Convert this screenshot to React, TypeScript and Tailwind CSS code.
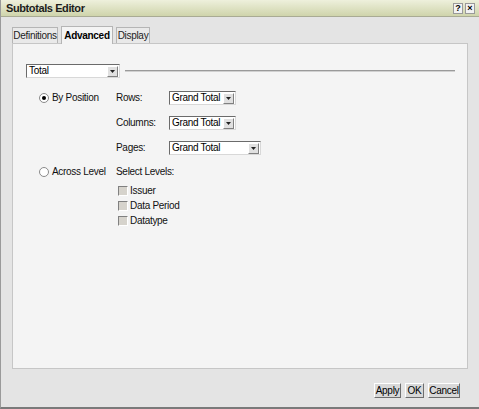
const font = { fontFamily: '"Liberation Sans", Arial, sans-serif' };

function Arrow() {
  return (
    <span className="flex items-center justify-center w-[11px] h-[11px] bg-[#e0e0e0] border border-t-white border-l-white border-b-[#808080] border-r-[#808080]">
      <svg width="5" height="3" viewBox="0 0 5 3">
        <path d="M0 0h5L2.5 3z" fill="#222" />
      </svg>
    </span>
  );
}

function Select({ value, width }: { value: string; width: string }) {
  return (
    <div className={`${width} h-[14px] flex items-center justify-between bg-white border border-t-[#6b6b6b] border-l-[#6b6b6b] border-b-[#d8d8d8] border-r-[#d8d8d8] pl-[2px] pr-[1px]`}>
      <span className="text-[10px] tracking-[-0.3px] whitespace-nowrap leading-none text-black">{value}</span>
      <Arrow />
    </div>
  );
}

function Radio({ checked, label }: { checked?: boolean; label: string }) {
  return (
    <div className="flex items-center gap-[3px]">
      <span className="w-[10px] h-[10px] rounded-full bg-white border border-[#8a8a8a] flex items-center justify-center">
        {checked && <span className="w-[4px] h-[4px] rounded-full bg-black" />}
      </span>
      <span className="text-[10px] tracking-[-0.3px] whitespace-nowrap leading-none text-[#111]">{label}</span>
    </div>
  );
}

function Check({ label }: { label: string }) {
  return (
    <div className="flex items-center gap-[2px] h-[15px]">
      <span className="w-[10px] h-[10px] bg-[#d6d3cc] border border-t-[#808080] border-l-[#808080] border-b-white border-r-white" />
      <span className="text-[10px] tracking-[-0.3px] whitespace-nowrap leading-none text-[#111]">{label}</span>
    </div>
  );
}

function Btn({ label, width }: { label: string; width: string }) {
  return (
    <button className={`${width} h-[15px] bg-[#d8d8d8] border border-t-white border-l-white border-b-[#6e6e6e] border-r-[#6e6e6e] text-[10px] tracking-[-0.3px] leading-none text-black`}>
      {label}
    </button>
  );
}

function Label({ text }: { text: string }) {
  return <span className="w-[53px] text-[10px] tracking-[-0.3px] whitespace-nowrap leading-none text-[#111]">{text}</span>;
}

export default function App() {
  return (
    <div style={font} className="w-[479px] h-[409px] bg-[#e4e4e4] border-l border-l-[#9a9a9a] border-b-2 border-b-[#7a7a7a] flex flex-col overflow-hidden">
      {/* title bar */}
      <div className="h-[17px] flex items-center justify-between pl-[5px] pr-[4px] bg-gradient-to-b from-[#eef0dc] to-[#cfd4ab] border-b border-b-[#a9ab94]">
        <span className="text-[11px] font-bold tracking-[-0.4px] text-[#1c1c1c] leading-none">Subtotals Editor</span>
        <div className="flex gap-[2px]">
          <span className="w-[10px] h-[11px] bg-[#f2f2f2] border border-[#9a9a9a] flex items-center justify-center text-[9px] font-bold leading-none">?</span>
          <span className="w-[10px] h-[11px] bg-[#f2f2f2] border border-[#9a9a9a] flex items-center justify-center text-[9px] font-bold leading-none">×</span>
        </div>
      </div>

      {/* tabs */}
      <div className="flex items-end pl-[11px] mt-[8px] gap-[3px] h-[18px]">
        <div className="w-[46px] h-[16px] flex items-center justify-center bg-[#e9e9e9] border border-b-0 border-[#b5b5b5] text-[10px] tracking-[-0.3px] leading-none text-[#222]">Definitions</div>
        <div className="w-[52px] h-[18px] flex items-center justify-center bg-[#f4f4f4] border border-b-0 border-[#b5b5b5] text-[10px] font-bold tracking-[-0.3px] leading-none text-black -mb-px relative z-10">Advanced</div>
        <div className="w-[34px] h-[16px] flex items-center justify-center bg-[#e9e9e9] border border-b-0 border-[#b5b5b5] text-[10px] tracking-[-0.3px] leading-none text-[#222]">Display</div>
      </div>

      {/* panel */}
      <div className="ml-[11px] w-[456px] h-[326px] bg-[#f4f4f4] border border-[#c6c6c6] pt-[20px] pl-[13px]">
        <div className="flex items-center">
          <Select value="Total" width="w-[94px]" />
          <div className="ml-[5px] w-[330px] h-[2px] bg-[#9a9a9a] border-b border-b-[#d0d0d0]" />
        </div>

        <div className="mt-[13px] flex">
          <div className="w-[90px] pl-[13px] pt-[2px]">
            <Radio checked label="By Position" />
          </div>
          <div className="flex flex-col gap-[11px]">
            <div className="flex items-center">
              <Label text="Rows:" />
              <Select value="Grand Total" width="w-[67px]" />
            </div>
            <div className="flex items-center">
              <Label text="Columns:" />
              <Select value="Grand Total" width="w-[67px]" />
            </div>
            <div className="flex items-center">
              <Label text="Pages:" />
              <Select value="Grand Total" width="w-[92px]" />
            </div>
          </div>
        </div>

        <div className="mt-[12px] flex">
          <div className="w-[90px] pl-[13px]">
            <Radio label="Across Level" />
          </div>
          <div className="flex flex-col">
            <span className="text-[10px] tracking-[-0.3px] leading-none text-[#111]">Select Levels:</span>
            <div className="mt-[6px] pl-[2px] flex flex-col">
              <Check label="Issuer" />
              <Check label="Data Period" />
              <Check label="Datatype" />
            </div>
          </div>
        </div>
      </div>

      {/* footer */}
      <div className="flex justify-end gap-[4px] pr-[19px] mt-[14px]">
        <Btn label="Apply" width="w-[27px]" />
        <Btn label="OK" width="w-[19px]" />
        <Btn label="Cancel" width="w-[32px]" />
      </div>
    </div>
  );
}
